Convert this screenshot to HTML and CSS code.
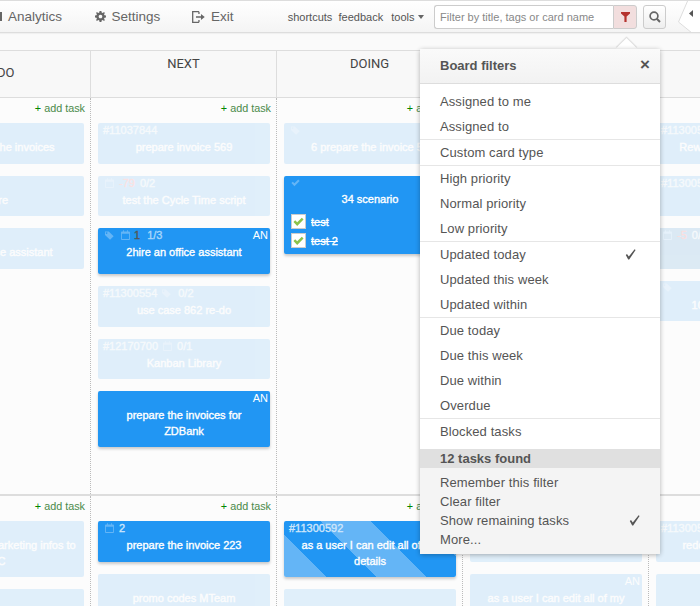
FILE: index.html
```html
<!DOCTYPE html>
<html lang="en">
<head>
<meta charset="utf-8">
<title>Board</title>
<link rel="stylesheet" href="styles.css">
</head>
<body>
<svg class="defs" width="0" height="0" aria-hidden="true">
  <symbol id="i-tag" viewBox="0 0 10 10"><path d="M0 0.5 H4.2 L9.6 5.9 L5.6 9.8 L0 4.4 Z M1.8 1.4 a0.9 0.9 0 1 0 0.01 0 Z" fill-rule="evenodd"/></symbol>
  <symbol id="i-cal" viewBox="0 0 10 11"><path d="M1 1.5 H2.2 V0.3 H3.2 V1.5 H6.8 V0.3 H7.8 V1.5 H9 a1 1 0 0 1 1 1 V10 a1 1 0 0 1 -1 1 H1 a1 1 0 0 1 -1 -1 V2.5 a1 1 0 0 1 1 -1 Z M1 4 V10 H9 V4 Z" fill-rule="evenodd"/></symbol>
  <symbol id="i-chk" viewBox="0 0 12 10"><path d="M0.5 5 L2.4 3.2 L4.6 5.4 L9.6 0.4 L11.5 2.3 L4.6 9.4 Z"/></symbol>
  <symbol id="i-thin" viewBox="0 0 11 11"><path d="M0.8 6 L2 5 L3.8 7.6 L9.6 0.3 L10.6 1 L4.2 10.6 L3.2 10.6 Z"/></symbol>
</svg>
<div class="page">
  <nav class="nav">
    <span class="nav-bar"></span>
    <a class="nav-link link-analytics">Analytics</a>
    <svg class="ico-gear" viewBox="0 0 12 12"><path fill="#666" fill-rule="evenodd" d="M5 0 H7 L7.3 1.6 L8.5 2.1 L9.9 1.2 L10.8 2.1 L9.9 3.5 L10.4 4.7 L12 5 V7 L10.4 7.3 L9.9 8.5 L10.8 9.9 L9.9 10.8 L8.5 9.9 L7.3 10.4 L7 12 H5 L4.7 10.4 L3.5 9.9 L2.1 10.8 L1.2 9.9 L2.1 8.5 L1.6 7.3 L0 7 V5 L1.6 4.7 L2.1 3.5 L1.2 2.1 L2.1 1.2 L3.5 2.1 L4.7 1.6 Z M6 4 a2 2 0 1 0 0.01 0 Z"/></svg>
    <a class="nav-link link-settings">Settings</a>
    <svg class="ico-exit" viewBox="0 0 13 12"><path fill="none" stroke="#666" stroke-width="1.3" d="M7 0.7 H0.7 V11.3 H7 M7 0.7 V3 M7 11.3 V9"/><path fill="#666" d="M4 5.2 H9 V3 L12.8 6 L9 9 V6.8 H4 Z"/></svg>
    <a class="nav-link link-exit">Exit</a>
    <a class="nav-small link-shortcuts">shortcuts</a>
    <a class="nav-small link-feedback">feedback</a>
    <a class="nav-small link-tools">tools</a>
    <span class="caret"></span>
    <div class="filter-group">
      <input class="filter-input" type="text" placeholder="Filter by title, tags or card name">
      <button class="filter-btn" aria-label="Filter"><svg class="ico-funnel" viewBox="0 0 9 10"><path fill="#b5322e" d="M0 0 H9 V1.6 L5.6 4.6 V10 H3.4 V4.6 L0 1.6 Z"/></svg></button>
    </div>
    <button class="search-btn" aria-label="Search"><svg class="ico-search" viewBox="0 0 12 12"><circle cx="5" cy="5" r="3.9" fill="none" stroke="#666" stroke-width="1.7"/><path d="M7.8 7.8 L11 11" stroke="#666" stroke-width="2"/></svg></button>
    <svg class="toggle" viewBox="0 0 22 31"><path d="M10 -1 L0.5 21 L14 32 H23 V-1 Z" fill="#fff" stroke="#ddd"/><path d="M15 9 V16 L11 12.500 Z" fill="#555"/></svg>
  </nav>

  <div class="subbar"></div>

  <div class="board">
    <div class="head-row">
      <div class="head head-first">TODO</div>
      <div class="head">NEXT</div>
      <div class="head">DOING</div>
      <div class="head"></div>
      <div class="head"></div>
    </div>

    <div class="lane lane-one">
      <div class="col">
        <div class="add"><span class="plus">+</span> add task</div>
        <div class="card faded"><div class="meta"></div><div class="title">prepare all the invoices</div></div>
        <div class="card faded"><div class="meta"></div><div class="title">Hire</div></div>
        <div class="card faded"><div class="meta meta-end"><span class="neg neg-first">-3</span></div><div class="title">hire an office assistant</div></div>
      </div>
      <div class="col">
        <div class="add"><span class="plus">+</span> add task</div>
        <div class="card faded"><div class="meta"><span class="num">#11037844</span></div><div class="title">prepare invoice 569</div></div>
        <div class="card faded"><div class="meta"><svg class="ic ic-cal ic-lead"><use href="#i-cal"/></svg><span class="neg">-79</span><span class="num">0/2</span></div><div class="title">test the Cycle Time script</div></div>
        <div class="card solid tall"><div class="meta"><svg class="ic ic-tag ic-lead"><use href="#i-tag"/></svg><svg class="ic ic-cal"><use href="#i-cal"/></svg><span class="dark">1</span><span class="num num-soft">1/3</span><span class="an">AN</span></div><div class="title">2hire an office assistant</div></div>
        <div class="card faded"><div class="meta"><span class="num">#11300554</span><svg class="ic ic-tag"><use href="#i-tag"/></svg><span class="num">0/2</span></div><div class="title">use case 862 re-do</div></div>
        <div class="card faded"><div class="meta"><span class="num">#12170700</span><svg class="ic ic-cal"><use href="#i-cal"/></svg><span class="num">0/1</span></div><div class="title">Kanban Library</div></div>
        <div class="card solid"><div class="meta"><span class="an">AN</span></div><div class="title">prepare the invoices for<br>ZDBank</div></div>
      </div>
      <div class="col">
        <div class="add"><span class="plus">+</span> add task</div>
        <div class="card faded"><div class="meta"><svg class="ic ic-tag ic-lead"><use href="#i-tag"/></svg></div><div class="title">6 prepare the invoice 56</div></div>
        <div class="card solid card-list"><div class="meta"><svg class="ic ic-chk ic-lead"><use href="#i-chk"/></svg></div>
          <div class="title">34 scenario</div>
          <ul class="checks">
            <li class="check"><span class="box"><svg class="tick" viewBox="0 0 12 10"><use href="#i-chk"/></svg></span><s>test</s></li>
            <li class="check"><span class="box"><svg class="tick" viewBox="0 0 12 10"><use href="#i-chk"/></svg></span><s>test 2</s></li>
          </ul>
        </div>
      </div>
      <div class="col">
        <div class="add"><span class="plus">+</span> add task</div>
      </div>
      <div class="col">
        <div class="add"><span class="plus">+</span> add task</div>
        <div class="card faded"><div class="meta"><span class="num">#11300512</span></div><div class="title">Rework the invoice layout</div></div>
        <div class="card faded"><div class="meta"><span class="num">#11300533</span></div><div class="title">use case 12 redo</div></div>
        <div class="card faded greyed"><div class="meta"><svg class="ic ic-cal ic-lead"><use href="#i-cal"/></svg><span class="neg">-5</span><span class="num">0/1</span></div><div class="title">prepare offer 12</div></div>
        <div class="card faded"><div class="meta"><svg class="ic ic-tag ic-lead"><use href="#i-tag"/></svg></div><div class="title">100 Invoices to send</div></div>
      </div>
    </div>

    <div class="lane">
      <div class="col">
        <div class="add"><span class="plus">+</span> add task</div>
        <div class="card faded"><div class="meta"></div><div class="title">send the new marketing infos to<br>TC</div></div>
        <div class="card faded"><div class="meta"></div><div class="title">notes</div></div>
      </div>
      <div class="col">
        <div class="add"><span class="plus">+</span> add task</div>
        <div class="card solid"><div class="meta"><svg class="ic ic-cal ic-lead"><use href="#i-cal"/></svg><span class="num">2</span></div><div class="title">prepare the invoice 223</div></div>
        <div class="card faded"><div class="meta"></div><div class="title">promo codes MTeam</div></div>
      </div>
      <div class="col">
        <div class="add"><span class="plus">+</span> add task</div>
        <div class="card striped"><div class="meta"><span class="num">#11300592</span></div><div class="title">as a user I can edit all of my<br>details</div></div>
        <div class="card faded"><div class="meta"></div><div class="title">notes</div></div>
      </div>
      <div class="col">
        <div class="add"><span class="plus">+</span> add task</div>
        <div class="card faded"><div class="meta"></div><div class="title">review</div></div>
        <div class="card faded"><div class="meta"><span class="an">AN</span></div><div class="title">as a user I can edit all of my<br>details</div></div>
      </div>
      <div class="col">
        <div class="add"><span class="plus">+</span> add task</div>
        <div class="card faded"><div class="meta"><span class="num">#11300560</span></div><div class="title">redo the marketing page</div></div>
        <div class="card faded"><div class="meta"></div><div class="title">notes</div></div>
      </div>
    </div>
  </div>

  <span class="pop-arrow"></span>
  <aside class="popover">
    <header class="pop-head"><span>Board filters</span><span class="pop-close">×</span></header>
    <section class="pop-sec first">
      <div class="pop-item">Assigned to me</div>
      <div class="pop-item">Assigned to</div>
    </section>
    <section class="pop-sec">
      <div class="pop-item">Custom card type</div>
    </section>
    <section class="pop-sec">
      <div class="pop-item">High priority</div>
      <div class="pop-item">Normal priority</div>
      <div class="pop-item">Low priority</div>
    </section>
    <section class="pop-sec">
      <div class="pop-item">Updated today<svg class="pop-check"><use href="#i-thin"/></svg></div>
      <div class="pop-item">Updated this week</div>
      <div class="pop-item">Updated within</div>
    </section>
    <section class="pop-sec">
      <div class="pop-item">Due today</div>
      <div class="pop-item">Due this week</div>
      <div class="pop-item">Due within</div>
      <div class="pop-item">Overdue</div>
    </section>
    <section class="pop-sec last">
      <div class="pop-item">Blocked tasks</div>
    </section>
    <div class="pop-found">12 tasks found</div>
    <footer class="pop-foot">
      <div class="foot-item">Remember this filter</div>
      <div class="foot-item">Clear filter</div>
      <div class="foot-item">Show remaining tasks<svg class="pop-check"><use href="#i-thin"/></svg></div>
      <div class="foot-item">More...</div>
    </footer>
  </aside>
</div>
</body>
</html>
```

FILE: styles.css
```css
* { box-sizing: border-box; }
html, body { margin: 0; padding: 0; height: 606px; overflow: hidden; }
body { font-family: "Liberation Sans", Arial, sans-serif; color: #555; background: #fafafa; }
.defs { position: absolute; }
.page { position: relative; width: 700px; height: 606px; overflow: hidden; }

.nav {
  height: 33px; display: flex; align-items: center;
  border-top: 1px solid #ddd; border-bottom: 1px solid #ddd;
  background: linear-gradient(#fff, #f4f4f4);
  box-shadow: 0 1px 1px rgba(0,0,0,.04);
  white-space: nowrap;
}
.nav-bar { width: 2px; height: 9px; background: #666; margin-right: 6px; }
.nav-link { font-size: 13.5px; color: #666; }
.nav-small { font-size: 11px; color: #555; }
.link-analytics { width: 87px; }
.ico-gear { width: 11px; height: 11px; }
.link-settings { margin-left: 6px; width: 81px; }
.ico-exit { width: 13px; height: 12px; }
.link-exit { margin-left: 6px; width: 77px; }
.link-shortcuts { width: 51px; }
.link-feedback { width: 53px; }
.link-tools { width: 27px; }
.caret { width: 0; height: 0; border-left: 3px solid transparent; border-right: 3px solid transparent; border-top: 4px solid #666; }
.filter-group { display: flex; width: 203px; height: 24px; margin-left: 10px; }
.filter-input {
  width: 179px; height: 24px; border: 1px solid #ccc; border-right: 0; border-radius: 3px 0 0 3px;
  font: 11px "Liberation Sans", Arial, sans-serif; padding: 0 5px; background: #fff; outline: 0;
}
.filter-input::placeholder { color: #888; opacity: 1; }
.filter-btn {
  width: 24px; height: 24px; padding: 0; border: 1px solid #ccc; border-radius: 0 3px 3px 0; background: #f2dede;
  display: flex; align-items: center; justify-content: center;
}
.ico-funnel { width: 9px; height: 10px; }
.search-btn {
  width: 23px; height: 24px; padding: 0; margin-left: 6px; border: 1px solid #ccc; border-radius: 3px;
  background: linear-gradient(#fff, #eee); display: flex; align-items: center; justify-content: center;
}
.ico-search { width: 12px; height: 12px; }
.toggle { width: 22px; height: 31px; margin-left: 12px; flex: none; }

.subbar { height: 17px; }

.board { margin-left: -95px; width: 930px; }
.head-row, .lane { display: grid; grid-template-columns: repeat(5, 186px); }
.head-row { height: 48px; border-top: 1px solid #ddd; border-bottom: 1px solid #ddd; background: #f8f8f8; }
.head { border-right: 1px solid #ddd; text-align: center; font-family: Roboto, sans-serif; font-size: 13px; line-height: 16px; color: #444; padding-top: 5px; }
.head-first { padding-top: 14px; }
.lane { background: #fcfcfc; }
.lane-one { height: 398px; border-bottom: 2px solid #ddd; }
.col { border-right: 1px dotted #bbb; padding: 0 5px 0 7px; display: flex; flex-direction: column; align-items: stretch; }
.add { height: 25px; padding-top: 4px; line-height: 12px; font-size: 10.8px; text-align: right; color: #4a8a4a; }
.plus { color: #080; }
.card {
  width: 172px; min-height: 40.5px; margin-bottom: 12px; border-radius: 2px; color: #fff; background: #2196f3;
  box-shadow: 0 2px 3px rgba(0,0,0,.2); padding: 0 5px 8px; flex: none;
  -webkit-text-stroke: .35px currentColor;
}
.faded { opacity: .125; box-shadow: none; }
.greyed { opacity: .14; background: #1a7ec8; }
.tall { min-height: 46px; }
.card-list { padding-bottom: 3.5px; }
.striped { background: repeating-linear-gradient(45deg, #64b5f6 0 30px, #2196f3 30px 65.35px, #64b5f6 65.35px 70.7px); }
.meta { height: 14px; display: flex; align-items: center; gap: 5px; font-size: 11px; }
.meta-end { justify-content: flex-end; }
.title { font-size: 11px; line-height: 15.5px; text-align: center; margin-top: 3px; white-space: nowrap; }
.card-list .title { margin-top: 2px; }
.num { color: #cfe6fb; }
.num-soft { color: #a9d6fb; margin-left: 2px; }
.neg { color: #e33; }
.neg-first { margin-right: 90px; }
.dark { color: #555; margin-left: -1px; }
.an { margin-left: auto; margin-right: -3px; -webkit-text-stroke: 0; }
.ic { fill: #64b5f6; flex: none; }
.ic-tag { width: 9px; height: 9px; margin-right: 2px; }
.ic-cal { width: 9px; height: 10px; }
.ic-chk { width: 9px; height: 8px; }
.ic-lead { margin-left: 2px; }
.checks { list-style: none; margin: 5px 0 0; padding: 0; }
.check { display: flex; align-items: center; gap: 5px; height: 19px; font-size: 11px; margin-left: 2px; }
.box { width: 15px; height: 15px; background: #fff; border: 1px solid #ccc; display: flex; align-items: center; justify-content: center; }
.tick { width: 11px; height: 10px; fill: #8bc34a; -webkit-text-stroke: 0; }

.popover {
  position: absolute; left: 420px; top: 49px; width: 240px; height: 505px; background: #fff;
  box-shadow: 0 1px 5px rgba(0,0,0,.3); border-radius: 2px; font-size: 13px; letter-spacing: .1px; color: #555;
}
.pop-arrow {
  position: absolute; left: 619px; top: 41px; width: 15px; height: 15px; background: #fff;
  transform: rotate(45deg); box-shadow: -1px -1px 1px rgba(0,0,0,.12);
}
.pop-head {
  height: 35px; display: flex; justify-content: space-between; align-items: center; padding: 0 10px 2px 20px;
  font-size: 13px; font-weight: 700; letter-spacing: 0; border-bottom: 1px solid #ddd; background: linear-gradient(#fafafa, #f2f2f2);
  position: relative;
}
.pop-close { font-size: 17px; color: #555; }
.pop-sec { border-bottom: 1px solid #e6e6e6; }
.pop-sec.first { padding-top: 5px; }
.pop-sec.last { border-bottom: 0; padding-bottom: 5px; }
.pop-item { height: 25px; line-height: 25px; padding: 0 24px 0 20px; display: flex; justify-content: space-between; align-items: center; }
.pop-check { width: 11px; height: 11px; fill: #555; }
.pop-found { height: 19px; line-height: 19px; padding-left: 20px; background: #e0e0e0; font-weight: 700; font-size: 13px; letter-spacing: 0; }
.pop-foot { background: #f4f4f4; padding: 5px 0; height: 86px; }
.foot-item { height: 19px; line-height: 19px; padding: 0 20px; display: flex; justify-content: space-between; align-items: center; }
```
